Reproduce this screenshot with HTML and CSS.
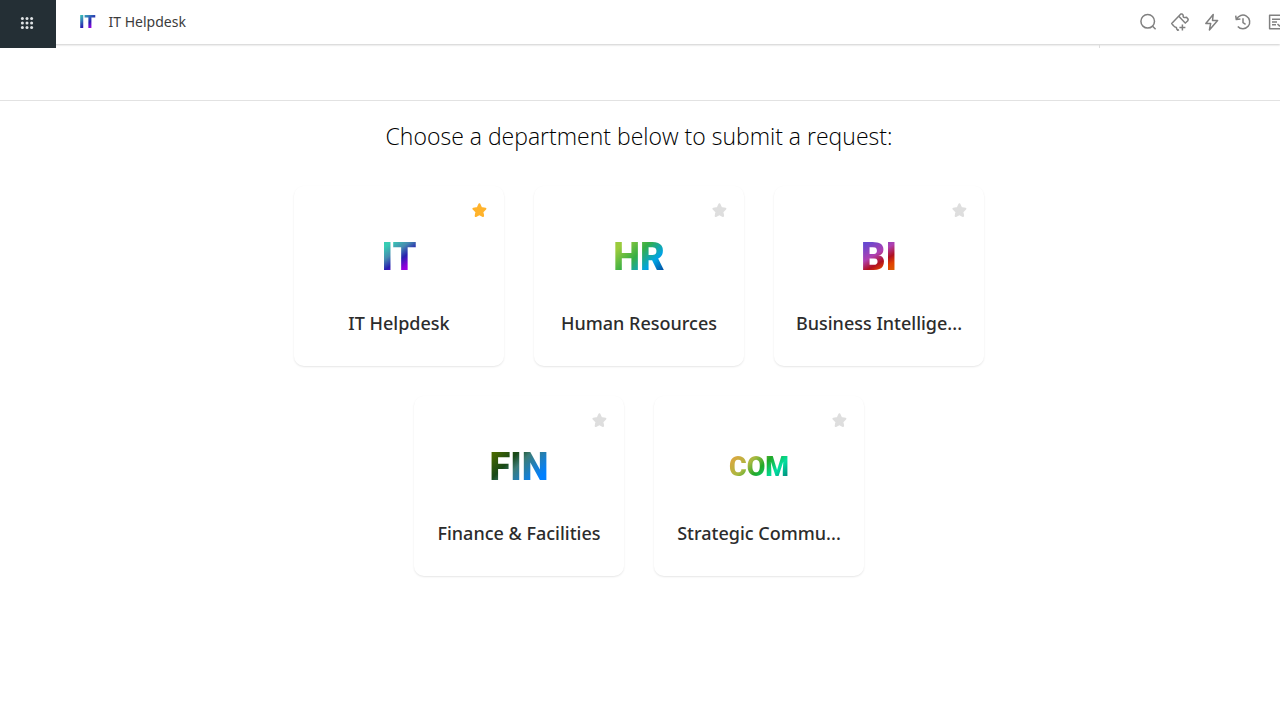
FILE: index.html
```html
<!DOCTYPE html>
<html lang="en">
<head>
<meta charset="utf-8">
<meta name="viewport" content="width=device-width, initial-scale=1">
<title>IT Helpdesk</title>
<link rel="stylesheet" href="styles.css">
</head>
<body>
<svg class="defs" aria-hidden="true">
  <symbol id="star" viewBox="0 0 16 16"><path d="M8.4 2.2 10.2 6.1 14.4 6.7 11.4 9.7 12.1 14 8.4 12.1 4.7 14 5.4 9.7 2.4 6.7 6.6 6.1Z" fill="currentColor" stroke="currentColor" stroke-width="2" stroke-linejoin="round"/></symbol>
</svg>
<header class="topbar">
  <button class="launcher" type="button" aria-label="Apps">
    <svg width="14" height="14" viewBox="0 0 14 14" fill="#dfe3e5"><circle cx="2.4" cy="2.6" r="1.5"/><circle cx="7" cy="2.6" r="1.5"/><circle cx="11.6" cy="2.6" r="1.5"/><circle cx="2.4" cy="7.1" r="1.5"/><circle cx="7" cy="7.1" r="1.5"/><circle cx="11.6" cy="7.1" r="1.5"/><circle cx="2.4" cy="11.6" r="1.5"/><circle cx="7" cy="11.6" r="1.5"/><circle cx="11.6" cy="11.6" r="1.5"/></svg>
  </button>
  <a class="brand" href="#"><span class="logo logo-it logo-tiny">IT</span><span class="brand-name">IT Helpdesk</span></a>
  <nav class="tools" aria-label="Tools">
    <button class="tool" type="button" aria-label="Search"><svg viewBox="0 0 20 20"><circle cx="9.7" cy="9.3" r="6.8"/><path d="m14.6 14.2 3 3"/></svg></button>
    <button class="tool" type="button" aria-label="New ticket"><svg viewBox="0 0 20 20"><path d="M9 17.7 7.7 18.2 6.6 16.8Q6.8 15 5 15L3.5 13.7 1.7 11.5 10.8 2.1 12.1 1.9 13.2 3.3Q12.8 5.2 14.4 5.4 16 5.6 16.5 5.2L18.2 7.3 17.8 8.7 14.8 11.5M8.8 4.3 15.2 10.9M12.4 12.5V18.5M9.4 15.5H15.4"/></svg></button>
    <button class="tool" type="button" aria-label="Quick actions"><svg viewBox="0 0 20 20"><path d="M11.2 2.4 3.8 11.4H8.7L7.4 18 15.6 8.6H10.5Z"/></svg></button>
    <button class="tool" type="button" aria-label="History"><svg viewBox="0 0 20 20"><path d="M2.6 7.4A6.8 6.8 0 1 1 3.8 14.4M1.7 3.6 2.3 7.6 6.4 7M9 6.3V10.7L11.6 12.3"/></svg></button>
    <button class="tool" type="button" aria-label="Notes"><svg viewBox="0 0 20 20"><path d="M18 3.3H3.6V16.7H18M6 7.2H14M6 10H11M6 12.8H10M11.5 12 13.5 14 17 10.5"/></svg></button>
  </nav>
</header>
<div class="subbar"><div class="subbar-mark"></div></div>
<main class="page">
  <h1 class="heading">Choose a department below to submit a request:</h1>
  <ul class="cards">
    <li class="card">
      <button class="fav fav-on" type="button" aria-label="Favourite IT Helpdesk"><svg><use href="#star"/></svg></button>
      <a class="card-link" href="#"><span class="logo logo-it">IT</span><span class="card-title">IT Helpdesk</span></a>
    </li>
    <li class="card">
      <button class="fav" type="button" aria-label="Favourite Human Resources"><svg><use href="#star"/></svg></button>
      <a class="card-link" href="#"><span class="logo logo-hr">HR</span><span class="card-title">Human Resources</span></a>
    </li>
    <li class="card">
      <button class="fav" type="button" aria-label="Favourite Business Intelligence"><svg><use href="#star"/></svg></button>
      <a class="card-link" href="#"><span class="logo logo-bi">BI</span><span class="card-title">Business Intellige...</span></a>
    </li>
    <li class="card">
      <button class="fav" type="button" aria-label="Favourite Finance and Facilities"><svg><use href="#star"/></svg></button>
      <a class="card-link" href="#"><span class="logo logo-fin">FIN</span><span class="card-title">Finance &amp; Facilities</span></a>
    </li>
    <li class="card">
      <button class="fav" type="button" aria-label="Favourite Strategic Communications"><svg><use href="#star"/></svg></button>
      <a class="card-link" href="#"><span class="logo logo-com">COM</span><span class="card-title">Strategic Commu...</span></a>
    </li>
  </ul>
</main>
</body>
</html>
```
FILE: styles.css
```css
* { box-sizing: border-box; }
body { margin: 0; background: #fff; color: #2c2c2c; font-family: "Noto Sans", "Open Sans", sans-serif; overflow-x: hidden; }
button { padding: 0; border: 0; background: none; cursor: pointer; }
a { color: inherit; text-decoration: none; }
.defs { position: absolute; width: 0; height: 0; }

.topbar { display: flex; align-items: flex-start; height: 44px; box-shadow: 0 1px 2px rgba(0, 0, 0, .2); }
.launcher { display: flex; align-items: center; justify-content: center; flex: none; width: 56px; height: 48px; padding-right: 2px; padding-bottom: 2px; background: #242f35; z-index: 1; }
.brand { display: flex; align-items: center; gap: 13px; height: 44px; padding-left: 23px; }
.brand-name { font-size: 14px; line-height: 20px; color: #3c3c3c; }
.tools { display: flex; align-items: center; gap: 12px; height: 44px; margin-left: auto; margin-right: -6px; }
.tool { width: 20px; height: 20px; }
.tool svg { display: block; width: 20px; height: 20px; fill: none; stroke: #808080; stroke-width: 1.5; stroke-linejoin: round; }
.subbar { display: flex; justify-content: flex-end; height: 57px; padding-right: 180px; border-bottom: 1px solid #e2e2e2; }
.subbar-mark { width: 1px; height: 4px; background: #ddd; }

.page { padding: 20px 2px 40px 0; }
.heading { margin: 0; font-family: "Open Sans", "Noto Sans", sans-serif; font-size: 23px; line-height: 30px; font-weight: 300; text-align: center; color: #000; }
.cards { display: flex; flex-wrap: wrap; justify-content: center; gap: 30px; max-width: 690px; margin: 35px auto 0; padding: 0; list-style: none; }
.card { position: relative; width: 210px; border-radius: 10px; box-shadow: 0 1px 2px rgba(0, 0, 0, .1); }
.card-link { display: flex; flex-direction: column; align-items: center; gap: 26px; padding: 44px 20px 30px; }
.card-title { white-space: nowrap; font-size: 18px; line-height: 26px; font-weight: 500; }
.fav { position: absolute; top: 16px; right: 17px; width: 16px; height: 16px; color: #dedede; }
.fav svg { display: block; width: 16px; height: 16px; }
.fav-on { color: #ffb32c; }

.logo { font-family: Roboto, sans-serif; font-weight: 900; font-size: 38px; line-height: 54px; color: transparent; background-clip: text; -webkit-background-clip: text; }
.logo-it { background-image: linear-gradient(145deg, #38cdb4 24%, #468cb0 40%, #2820b0 54%, #9000dc 68%, #b000f0 80%); }
.logo-hr { background-image: linear-gradient(135deg, #9bcb3c 22%, #35ae45 46%, #00a4e4 68%, #0054a6 84%); }
.logo-bi { background-image: linear-gradient(150deg, #6548d0 22%, #b040b0 44%, #b01020 58%, #e04000 68%, #d86800 84%); }
.logo-fin { background-image: linear-gradient(135deg, #486800 15%, #184818 36%, #3c7c78 48%, #1880d0 66%, #0080ff 78%); }
.logo-com { font-size: 27px; background-image: linear-gradient(135deg, #d8a840 20%, #a8b840 38%, #20a828 52%, #00e0a0 68%, #009080 82%); }
.logo-tiny { font-size: 18px; line-height: 22px; background-image: linear-gradient(145deg, #38cdb4 12%, #3484b8 32%, #2820b0 54%, #b000f0 78%); }
```
